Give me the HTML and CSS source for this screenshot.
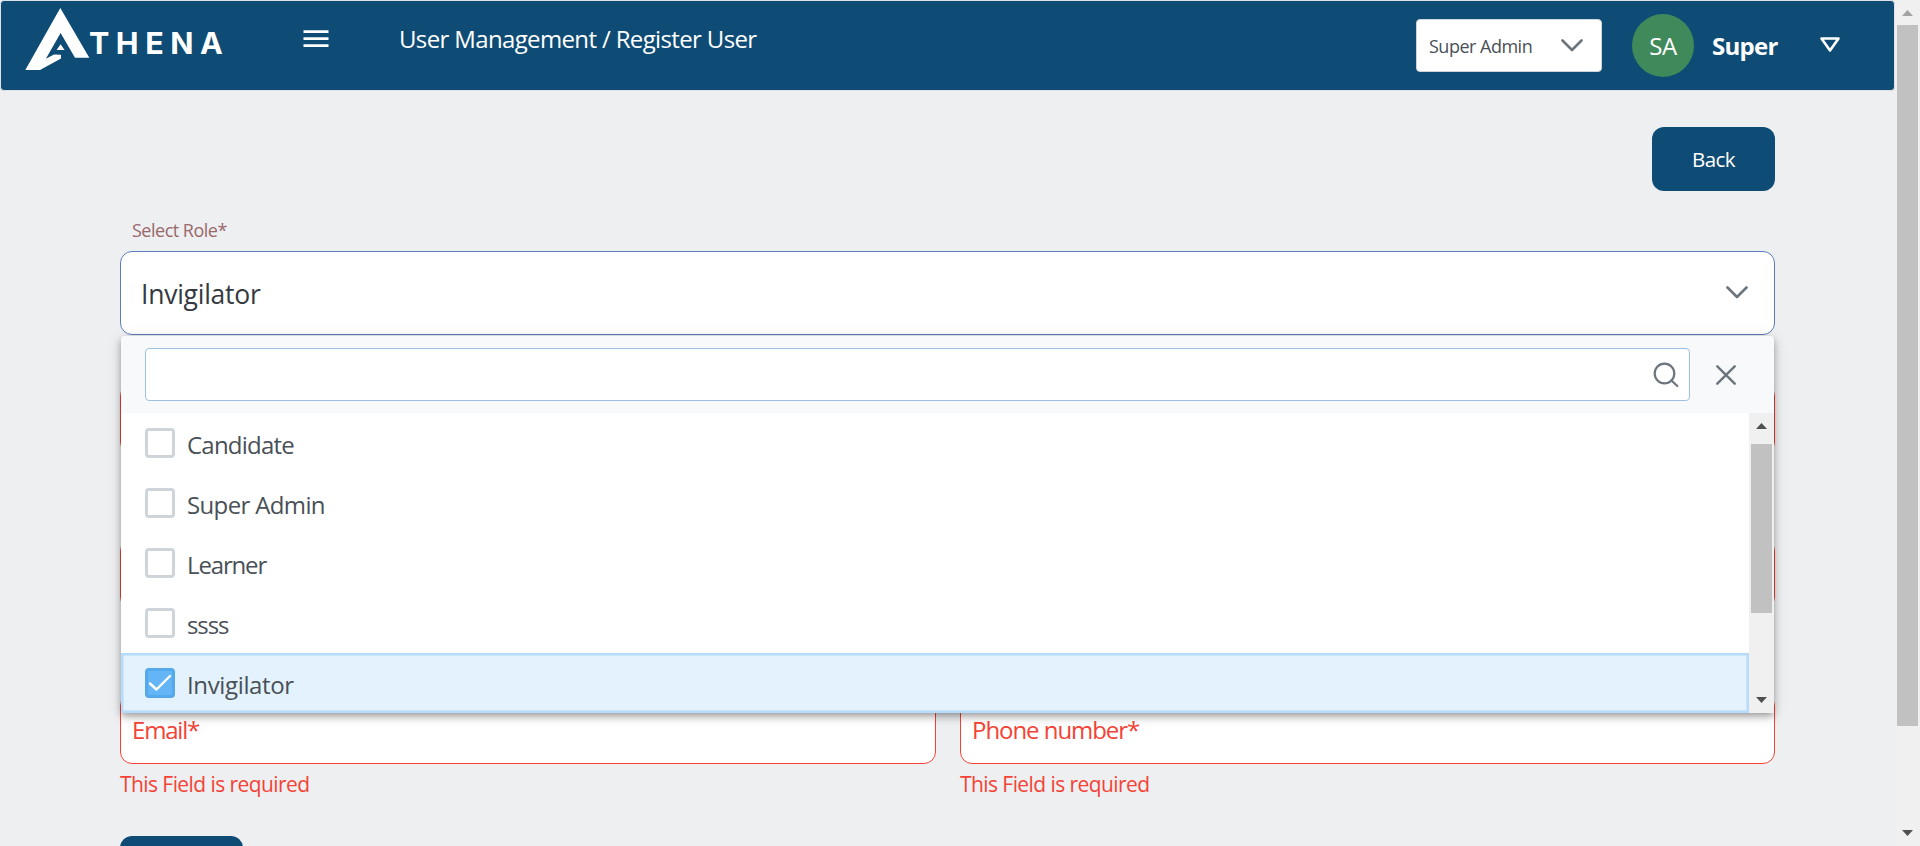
FILE: index.html
```html
<!DOCTYPE html>
<html lang="en">
<head>
<meta charset="utf-8">
<title>Register User</title>
<link rel="stylesheet" href="styles.css">
</head>
<body>
<div class="app">
  <div class="page">
    <header class="topbar">
      <div class="logo">
        <svg class="logo-mark" width="65" height="64" viewBox="0 0 65 64" fill="#fff">
          <path d="M35.300 1 64.300 50.700H50L35.600 26 20.900 51.700 29 47.600 36 47.800V51.400L15 63H.3Z"/>
          <path d="M35.600 37.300 39.600 43H31.600Z"/>
        </svg>
        <span class="logo-text">THENA</span>
      </div>
      <svg class="menu-icon" width="26" height="18" viewBox="0 0 26 18" fill="none" stroke="#fff" stroke-width="2.600"><path d="M.5 1.600h25M.5 8.600h25M.5 15.600h25"/></svg>
      <div class="title">User Management / Register User</div>
      <div class="role-switch"><span>Super Admin</span>
        <svg width="22" height="13" viewBox="0 0 22 13" fill="none" stroke="#6c757d" stroke-width="2.600" stroke-linecap="round" stroke-linejoin="round"><path d="M1.500 1.500 11 11 20.500 1.500"/></svg>
      </div>
      <div class="avatar">SA</div>
      <div class="user">Super</div>
      <svg class="user-caret" width="20" height="16" viewBox="0 0 20 16" fill="none" stroke="#fff" stroke-width="2.600" stroke-linejoin="round"><path d="M1.500 1.500H18.500L10 13.500Z"/></svg>
    </header>
    <main class="content">
      <button class="btn back">Back</button>
      <label class="select-label"><span>Select Role*</span></label>
      <div class="select">
        <span class="select-value">Invigilator</span>
        <svg width="22" height="13" viewBox="0 0 22 13" fill="none" stroke="#6c757d" stroke-width="2.600" stroke-linecap="round" stroke-linejoin="round"><path d="M1.500 1.500 11 11 20.500 1.500"/></svg>
        <div class="panel">
          <div class="panel-head">
            <div class="search">
              <svg width="26" height="26" viewBox="0 0 26 26" fill="none" stroke="#6c757d" stroke-width="2.200" stroke-linecap="round"><circle cx="11.500" cy="11.500" r="9.800"/><path d="m18.500 18.500 5.800 5.500"/></svg>
            </div>
            <svg width="20" height="20" viewBox="0 0 20 20" fill="none" stroke="#6c757d" stroke-width="2.400" stroke-linecap="round"><path d="m1.300 1.300 17.400 17.400M18.700 1.300 1.300 18.700"/></svg>
          </div>
          <div class="panel-body">
            <ul class="options">
              <li class="option"><i class="box"></i><span class="candidate">Candidate</span></li>
              <li class="option"><i class="box"></i><span class="admin">Super Admin</span></li>
              <li class="option"><i class="box"></i><span class="learner">Learner</span></li>
              <li class="option"><i class="box"></i><span class="ssss">ssss</span></li>
              <li class="option selected"><i class="box"><svg width="24" height="18" viewBox="0 0 24 18" fill="none" stroke="#fff" stroke-width="2.400" stroke-linecap="round" stroke-linejoin="round"><path d="m2 9.500 6.500 6L22 2"/></svg></i><span class="invigilator">Invigilator</span></li>
            </ul>
            <div class="scrollbar inner">
              <svg width="11" height="6"><path d="M0 6 5.500 0 11 6Z"/></svg>
              <div class="thumb"></div>
              <svg width="11" height="6"><path d="M0 0 5.500 6 11 0Z"/></svg>
            </div>
          </div>
        </div>
      </div>
      <div class="fields">
        <div class="field"><div class="input"></div></div>
        <div class="field"><div class="input"></div></div>
        <div class="field"><div class="input"></div></div>
        <div class="field"><div class="input"></div></div>
        <div class="field"><div class="input"><span class="email">Email*</span></div><p class="error">This Field is required</p></div>
        <div class="field"><div class="input"><span class="phone">Phone number*</span></div><p class="error">This Field is required</p></div>
      </div>
      <button class="btn submit"></button>
    </main>
  </div>
  <div class="scrollbar outer">
    <svg class="dim" width="11" height="6"><path d="M0 6 5.500 0 11 6Z"/></svg>
    <div class="thumb"></div>
    <svg width="11" height="6"><path d="M0 0 5.500 6 11 0Z"/></svg>
  </div>
</div>
</body>
</html>
```
FILE: styles.css
```css
* { box-sizing: border-box; }
body { margin: 0; overflow: hidden; font-family: "Open Sans", "Noto Sans", sans-serif; background: #eeeff1; }
svg { display: block; flex: none; }
.app { display: flex; height: 846px; overflow: hidden; }
.page { flex: 1; height: 846px; overflow: hidden; }
.topbar { display: flex; height: 91px; align-items: flex-start; border: 1px solid #dee2e6; border-radius: 4px; background: #0f4c75; color: #fff; white-space: nowrap; }
.logo { display: flex; width: 278px; padding: 6px 0 0 24px; }
.logo-text { margin: 15px 0 0 -1px; font: 700 30.500px/42px Inter, sans-serif; letter-spacing: 6.500px; }
.menu-icon { margin: 29px 0 0 24px; }
.title { width: 1017px; margin: 21px 0 0 70px; font-size: 24px; line-height: 34px; letter-spacing: -.64px; }
.role-switch { display: flex; align-items: center; justify-content: space-between; width: 186px; height: 53px; margin-top: 18px; padding: 0 18px 0 12px; border: 1px solid #ced4da; border-radius: 4px; background: #fff; color: #495057; font-size: 18px; letter-spacing: -.5px; }
.avatar { width: 62px; height: 63px; margin: 13px 0 0 30px; border-radius: 50%; background: #40895b; font-size: 24px; line-height: 63px; text-align: center; letter-spacing: -.5px; }
.user { width: 108px; margin: 28px 0 0 18px; font-size: 24px; line-height: 34px; font-weight: 700; letter-spacing: -.7px; }
.user-caret { margin-top: 36px; }

.content { display: flex; flex-direction: column; width: 1655px; margin: 36px 0 0 120px; }
.btn { width: 123px; height: 64px; flex: none; padding: 0; border: 0; border-radius: 12px; background: #0f4c75; color: #fff; font: 20.500px "Open Sans", sans-serif; letter-spacing: -.6px; }
.back { align-self: flex-end; }
.select-label { height: 60px; padding: 26px 0 0 12px; color: #9a686b; font-size: 18px; line-height: 26px; letter-spacing: -.5px; }
.select { position: relative; display: flex; align-items: center; justify-content: space-between; height: 84px; padding: 0 26px 2px 20px; border: 1px solid #5b7dba; border-radius: 12px; background: #fff; }
.select-value { padding-top: 4px; color: #343a40; font-size: 26.500px; letter-spacing: -.25px; }
.panel { position: absolute; z-index: 2; top: 84px; left: 0; width: 1653px; height: 377px; border-radius: 4px 4px 0 0; background: #fff; box-shadow: 0 3px 6px -1px rgba(0,0,0,.24), 0 4px 10px rgba(0,0,0,.16), 0 2px 16px rgba(0,0,0,.1); }
.panel-head { display: flex; align-items: center; gap: 26px; height: 77px; padding-left: 24px; border-radius: 4px 4px 0 0; background: #f8f9fa; }
.search { display: flex; align-items: center; justify-content: flex-end; width: 1545px; height: 53px; padding-right: 10px; border: 1px solid #9bc2e2; border-radius: 4px; background: #fff; }
.panel-body { display: flex; height: 300px; }
.options { flex: 1; margin: 0; padding: 0; list-style: none; }
.option { display: flex; align-items: center; gap: 12px; height: 60px; padding-left: 24px; color: #495057; font-size: 24px; }
.option span { padding-top: 2px; }
.candidate { letter-spacing: -.78px; }
.admin { letter-spacing: -.64px; }
.learner { letter-spacing: -1.15px; }
.ssss { letter-spacing: -1.1px; }
.invigilator { letter-spacing: -.36px; }
.box { display: flex; align-items: center; justify-content: center; width: 30px; height: 30px; border: 3px solid #ced4da; border-radius: 4px; background: #fff; }
.selected { background: #e3f2fd; box-shadow: inset 0 0 0 2px #b5dcfb, inset 0 0 0 3px #cbe6fc; }
.selected .box { border-color: #54a8ec; background: #64b5f6; }

.fields { display: grid; grid-template-columns: 816px 815px; column-gap: 24px; grid-auto-rows: 155px; margin-top: 49px; }
.input { height: 70px; padding: 18px 11px 0; border: 1px solid #f44336; border-radius: 12px; background: #fff; color: #f44336; font-size: 24px; line-height: 34px; }
.email { letter-spacing: -1.2px; }
.phone { letter-spacing: -1.05px; }
.error { margin: 5px 0 0; color: #f44336; font-size: 21px; line-height: 30px; letter-spacing: -.57px; }
.submit { margin-top: -13px; }

.scrollbar { display: flex; flex-direction: column; align-items: center; width: 25px; flex: none; background: #f0f0f0; fill: #505050; }
.thumb { width: 21px; background: #c1c1c1; }
.dim { fill: #a3a3a3; }
.outer { justify-content: space-between; padding: 10px 0; }
.outer .thumb { height: 701px; margin: 9px 0 auto; }
.inner { padding: 10px 0 10px; justify-content: space-between; }
.inner .thumb { height: 169px; margin: 15px 0 auto; }
```
